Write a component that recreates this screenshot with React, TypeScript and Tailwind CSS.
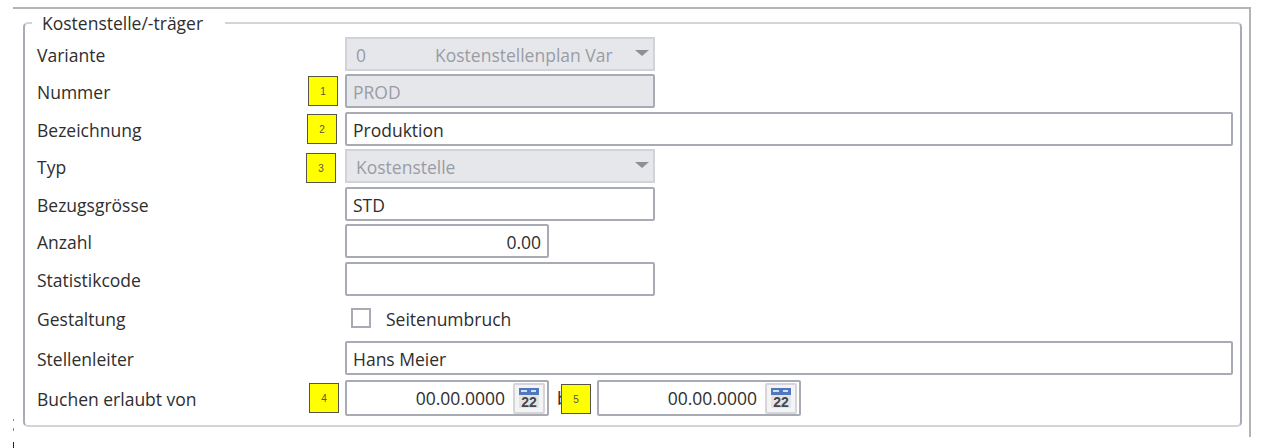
import type { ReactNode } from "react";

function Badge({ n, className }: { n: number; className: string }) {
  return (
    <div
      className={`absolute w-[30px] h-[30px] bg-[#ffff00] border border-[#55554a] flex items-center justify-center text-[10px] text-[#55553a] font-['Liberation_Sans',sans-serif] ${className}`}
    >
      {n}
    </div>
  );
}

function Row({ label, className, children }: { label: string; className: string; children: ReactNode }) {
  return (
    <div className={`flex items-center ${className}`}>
      <div className="w-[308px] shrink-0 pt-[2px] text-[#2e2e2e]">{label}</div>
      {children}
    </div>
  );
}

const inputCls = "h-full border-2 border-[#a8aab6] rounded-[2px] bg-white flex items-center px-[6px] pt-[2px] text-[#2e2e2e]";

function Arrow() {
  return (
    <svg width="14" height="6" viewBox="0 0 14 6" className="absolute right-[4px] top-[11px]">
      <path d="M0 0H14L7 6Z" fill="#8e8f96" />
    </svg>
  );
}

function CalendarButton() {
  return (
    <div className="w-[32px] h-[31px] border-2 border-[#d6d6da] rounded-[2px] bg-[#f4f4f5] flex items-center justify-center">
      <svg width="22" height="22" viewBox="0 0 22 22">
        <rect x="1" y="1" width="20" height="20" rx="1" fill="#e4e4e4" />
        <rect x="1" y="1" width="20" height="7" fill="#4f78c0" />
        <rect x="3" y="3" width="6" height="2" fill="#d5e0f2" />
        <rect x="13" y="3" width="5" height="2" fill="#d5e0f2" />
        <text x="11" y="19.5" textAnchor="middle" fontSize="14" fontWeight="700" fill="#44464c" fontFamily="Liberation Sans, sans-serif">
          22
        </text>
      </svg>
    </div>
  );
}

function DateInput() {
  return (
    <div className="w-[204px] h-[36px] border-2 border-[#a8aab6] rounded-[2px] bg-white flex items-center justify-end pr-[2px] text-[#2e2e2e]">
      <span className="mr-[8px]">00.00.0000</span>
      <CalendarButton />
    </div>
  );
}

export default function App() {
  return (
    <div className="relative w-[1261px] h-[448px] overflow-hidden bg-white pl-[13px] pt-[7px] font-['Open_Sans',sans-serif] text-[17.5px]">
      <div className="w-[1238px] h-[430px] border-t-2 border-r-2 border-[#b4b4b4] pl-[10px] pt-[5px]">
        <fieldset className="w-[1218px] h-[413px] border-2 border-[#d3d4da] border-l-[#a9abb8] border-r-[#a9abb8] rounded-[5px] pl-[12px] pr-[7px]">
          <legend className="ml-[-5px] pl-[10px] pr-[22px] text-[#2e2e2e] leading-[18px]">Kostenstelle/-träger</legend>
          <div className="relative flex flex-col">
            <Row label="Variante" className="h-[34px] mt-[5px]">
              <div className="relative w-[310px] h-full border-2 border-[#d2d3d8] bg-[#e6e7eb] flex items-center pt-[2px] text-[#9a9ca4]">
                <span className="w-[88px] pl-[9px]">0</span>
                <span className="w-[205px] overflow-hidden whitespace-nowrap">Kostenstellenplan Var</span>
                <Arrow />
              </div>
            </Row>
            <Row label="Nummer" className="h-[34px] mt-[3px]">
              <div className={`${inputCls} w-[310px] !bg-[#e6e7eb] !text-[#9a9ca4]`}>PROD</div>
            </Row>
            <Row label="Bezeichnung" className="h-[34px] mt-[4px]">
              <div className={`${inputCls} w-[888px]`}>Produktion</div>
            </Row>
            <Row label="Typ" className="h-[34px] mt-[3px]">
              <div className="relative w-[310px] h-full border-2 border-[#d2d3d8] bg-[#e6e7eb] flex items-center pl-[9px] pt-[2px] text-[#9a9ca4]">
                Kostenstelle
                <Arrow />
              </div>
            </Row>
            <Row label="Bezugsgrösse" className="h-[34px] mt-[4px]">
              <div className={`${inputCls} w-[310px]`}>STD</div>
            </Row>
            <Row label="Anzahl" className="h-[34px] mt-[3px]">
              <div className={`${inputCls} w-[204px] justify-end`}>0.00</div>
            </Row>
            <Row label="Statistikcode" className="h-[34px] mt-[4px]">
              <div className={`${inputCls} w-[310px]`} />
            </Row>
            <Row label="Gestaltung" className="h-[32px] mt-[6px]">
              <div className="ml-[6px] w-[20px] h-[20px] border-2 border-[#a8aab6] bg-white" />
              <span className="ml-[15px] pt-[2px] text-[#2e2e2e]">Seitenumbruch</span>
            </Row>
            <Row label="Stellenleiter" className="h-[34px] mt-[7px]">
              <div className={`${inputCls} w-[888px]`}>Hans Meier</div>
            </Row>
            <Row label="Buchen erlaubt von" className="h-[36px] mt-[5px]">
              <DateInput />
              <span className="w-[48px] pl-[8px] text-[#2e2e2e]">bis</span>
              <DateInput />
            </Row>
            <Badge n={1} className="left-[271px] top-[44px]" />
            <Badge n={2} className="left-[270px] top-[82px]" />
            <Badge n={3} className="left-[269px] top-[121px]" />
            <Badge n={4} className="left-[272px] top-[351px]" />
            <Badge n={5} className="left-[524px] top-[352px]" />
          </div>
        </fieldset>
      </div>
      <div className="absolute left-[13px] top-[419px] w-px h-[2px] bg-[#888]" />
      <div className="absolute left-[13px] top-[428px] w-px h-[3px] bg-[#888]" />
      <div className="absolute left-[13px] top-[442px] w-px h-[6px] bg-[#222]" />
    </div>
  );
}
